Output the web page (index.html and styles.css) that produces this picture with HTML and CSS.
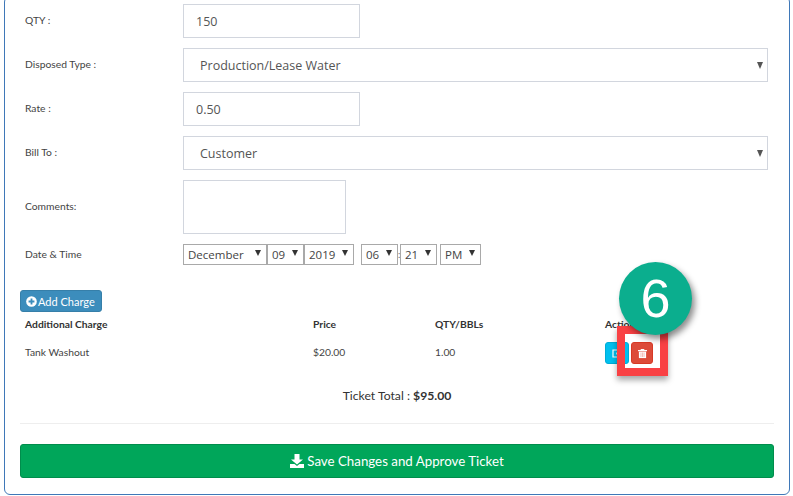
FILE: index.html
```html
<!DOCTYPE html>
<html lang="en">
<head>
<meta charset="utf-8">
<title>Edit Ticket</title>
<link rel="stylesheet" href="styles.css">
</head>
<body>
<main class="panel">
  <form class="form">
    <div class="row"><label class="label">QTY :</label><input class="field short" value="150"></div>
    <div class="row"><label class="label">Disposed Type :</label><div class="pick"><select class="field wide"><option>Production/Lease Water</option></select></div></div>
    <div class="row"><label class="label">Rate :</label><input class="field short" value="0.50"></div>
    <div class="row"><label class="label">Bill To :</label><div class="pick"><select class="field wide"><option>Customer</option></select></div></div>
    <div class="row"><label class="label">Comments:</label><textarea class="area"></textarea></div>
    <div class="row date-row"><label class="label">Date &amp; Time</label>
      <div class="dates">
        <div class="mini m-month"><select><option>December</option></select></div>
        <div class="mini m-day"><select><option>09</option></select></div>
        <div class="mini m-year"><select><option>2019</option></select></div>
        <div class="mini m-hour"><select><option>06</option></select></div>
        <span class="colon">:</span>
        <div class="mini m-min"><select><option>21</option></select></div>
        <div class="mini m-ampm"><select><option>PM</option></select></div>
      </div>
    </div>
  </form>

  <button class="add" type="button">
    <svg class="add-icon" viewBox="0 0 12 12" width="11" height="11"><circle cx="6" cy="6" r="5.8" fill="#fff"/><path d="M6 2.8v6.4M2.8 6h6.400" stroke="#3c8dbc" stroke-width="2"/></svg>
    Add Charge
  </button>

  <table class="charges">
    <thead><tr><th class="c1">Additional Charge</th><th class="c2">Price</th><th class="c3">QTY/BBLs</th><th>Actions</th></tr></thead>
    <tbody><tr>
      <td>Tank Washout</td><td>$20.00</td><td>1.00</td>
      <td><div class="actions">
        <button class="act edit" type="button"><svg viewBox="0 0 12 12" width="12" height="12" fill="none" stroke="#fff" stroke-width="1.200"><path d="M9 6.500V10H2V3h4"/><path d="M5 7.500l.4-1.800L9.500 1.600 11 3 6.800 7.100z" fill="#fff" stroke="none"/></svg></button>
        <button class="act del" type="button"><svg viewBox="1 1 10 10.200" width="9" height="11"><path d="M1 2.200h10v1.300H1zM4 1h4v1.300H4z" fill="#fff"/><path d="M2 4h8v7.200H2z" fill="#fff"/><path d="M4.300 5v5M6 5v5M7.700 5v5" stroke="#f0a8a0" stroke-width=".8"/></svg></button>
      </div></td>
    </tr></tbody>
  </table>

  <p class="total">Ticket Total : <b>$95.00</b></p>
  <hr class="rule">
  <button class="save" type="button">
    <svg viewBox="0 0 14 14" width="14" height="14"><path d="M4.500 0h5v5.500H13L7 10.500 1 5.500h3.500z" fill="#fff"/><path d="M0 10h4.500L7 12l2.500-2H14v4H0z" fill="#fff"/></svg>
    Save Changes and Approve Ticket
  </button>

  <div class="mark"></div>
  <div class="badge">6</div>
</main>
</body>
</html>
```

FILE: styles.css
```css
* { box-sizing: border-box; }
html, body { margin: 0; height: 496px; overflow: hidden; background: #fff; }
body { font-family: Lato, "Open Sans", sans-serif; color: #333; }

.panel {
  position: relative;
  margin: -4px 3px 0 4px;
  height: 499px;
  border: 1px solid #3f78b8;
  border-radius: 6px;
  padding: 7px 15px 0 15px;
}

.form { display: flex; flex-direction: column; gap: 10px; }
.row { display: flex; align-items: center; }
.label { width: 163px; padding: 0 0 2px 5px; font-size: 10.300px; color: #444; flex: none; }

.field {
  display: block;
  height: 34px;
  border: 1px solid #d2d6de;
  background: #fff;
  color: #555;
  font: 12.5px "Open Sans", sans-serif;
  padding: 0 12px;
  border-radius: 0;
  outline: 0;
}
.short { width: 177px; }
.wide { width: 585px; appearance: none; padding-left: 16px; }
.pick { position: relative; }
.pick::after {
  content: "";
  position: absolute;
  right: 5px;
  top: 14px;
  border-left: 3.5px solid transparent;
  border-right: 3.5px solid transparent;
  border-top: 7px solid #555;
}
.area { width: 163px; height: 54px; border: 1px solid #d2d6de; resize: none; display: block; outline: 0; }

.date-row { height: 21px; }
.dates { display: flex; align-items: center; }
.mini { position: relative; height: 21px; }
.mini select {
  appearance: none;
  display: block;
  width: 100%;
  height: 21px;
  border: 1px solid #a9a9a9;
  background: #fff;
  border-radius: 0;
  color: #444;
  font: 11.500px "Open Sans", sans-serif;
  padding: 0 0 0 4px;
}
.mini::after {
  content: "";
  position: absolute;
  right: 6px;
  top: 6px;
  border-left: 3px solid transparent;
  border-right: 3px solid transparent;
  border-top: 6px solid #333;
}
.m-month { width: 84px; }
.m-day { width: 37px; }
.m-year { width: 50px; margin-right: 7px; }
.m-hour { width: 37px; }
.colon { width: 2px; font-size: 9px; line-height: 1; color: #666; }
.m-min { width: 37px; }
.m-ampm { width: 41px; margin-left: 3px; }

.add {
  display: flex;
  align-items: center;
  gap: 1px;
  margin-top: 25px;
  width: 82px;
  height: 22px;
  padding: 0 0 0 5px;
  border: 1px solid #367fa9;
  border-radius: 3px;
  background: #3c8dbc;
  color: #fff;
  font: 11px Lato, sans-serif;
  white-space: nowrap;
}

.charges { width: 749px; margin: 0; border-collapse: collapse; font-size: 10.300px; table-layout: fixed; }
.charges th { text-align: left; font-weight: 700; padding: 0 5px; height: 23px; color: #333; }
.charges td { padding: 0 5px; height: 34px; color: #444; }
.c1 { width: 288px; }
.c2 { width: 122px; }
.c3 { width: 170px; }

.actions { display: flex; gap: 2px; margin-top: 2px; }
.act {
  display: flex;
  align-items: center;
  justify-content: center;
  width: 24px;
  height: 22px;
  padding: 0;
  border: 1px solid transparent;
  border-radius: 3px;
}
.edit { background: #00c0ef; border-color: #00acd6; }
.del { width: 22px; background: #dd4b39; border-color: #d73925; }

.total { margin: 19px 0 0; text-align: center; font-size: 12.200px; color: #333; height: 16px; line-height: 16px; }
.rule { margin: 19px 0 20px; border: 0; border-top: 1px solid #eee; }

.save {
  display: flex;
  align-items: center;
  justify-content: center;
  gap: 3px;
  width: 100%;
  height: 34px;
  border: 1px solid #008d4c;
  border-radius: 3px;
  background: #00a65a;
  color: #fff;
  font: 13.300px Lato, sans-serif;
}

.mark {
  position: absolute;
  left: 612px;
  top: 329px;
  width: 51px;
  height: 50px;
  border: 8px solid #f94144;
  box-shadow: 0 4px 6px rgba(0,0,0,.35);
}
.badge {
  position: absolute;
  left: 614px;
  top: 265px;
  width: 73px;
  height: 73px;
  border-radius: 50%;
  background: #0bae8e;
  color: #fff;
  font: 54px/73px "Liberation Sans", sans-serif;
  text-align: center;
  box-shadow: 3px 4px 6px rgba(0,0,0,.45);
}
```
